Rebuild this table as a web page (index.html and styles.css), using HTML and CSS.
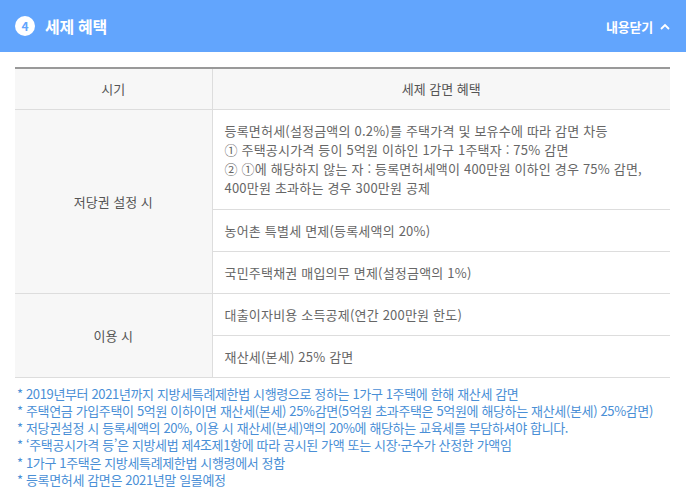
FILE: index.html
```html
<!DOCTYPE html>
<html lang="ko">
<head>
<meta charset="utf-8">
<link rel="stylesheet" href="styles.css">
</head>
<body>
<section class="panel">
  <header class="panel-head">
    <div class="title">
      <span class="num">4</span>
      <h2>세제 혜택</h2>
    </div>
    <button class="toggle">내용닫기
      <svg width="10" height="7" viewBox="0 0 10 7"><path d="M1 6 L5 2 L9 6" fill="none" stroke="#fff" stroke-width="1.8"/></svg>
    </button>
  </header>
  <div class="body">
    <table class="tax">
      <colgroup><col class="c1"><col></colgroup>
      <thead>
        <tr><th>시기</th><th>세제 감면 혜택</th></tr>
      </thead>
      <tbody>
        <tr>
          <th rowspan="3">저당권 설정 시</th>
          <td class="multi">등록면허세(설정금액의 0.2%)를 주택가격 및 보유수에 따라 감면 차등<br>① 주택공시가격 등이 5억원 이하인 1가구 1주택자 : 75% 감면<br>② ①에 해당하지 않는 자 : 등록면허세액이 400만원 이하인 경우 75% 감면,<br>400만원 초과하는 경우 300만원 공제</td>
        </tr>
        <tr><td>농어촌 특별세 면제(등록세액의 20%)</td></tr>
        <tr><td>국민주택채권 매입의무 면제(설정금액의 1%)</td></tr>
        <tr>
          <th rowspan="2">이용 시</th>
          <td>대출이자비용 소득공제(연간 200만원 한도)</td>
        </tr>
        <tr><td>재산세(본세) 25% 감면</td></tr>
      </tbody>
    </table>
    <ul class="notes">
      <li>* 2019년부터 2021년까지 지방세특례제한법 시행령으로 정하는 1가구 1주택에 한해 재산세 감면</li>
      <li>* 주택연금 가입주택이 5억원 이하이면 재산세(본세) 25%감면(5억원 초과주택은 5억원에 해당하는 재산세(본세) 25%감면)</li>
      <li>* 저당권설정 시 등록세액의 20%, 이용 시 재산세(본세)액의 20%에 해당하는 교육세를 부담하셔야 합니다.</li>
      <li>* ‘주택공시가격 등’은 지방세법 제4조제1항에 따라 공시된 가액 또는 시장·군수가 산정한 가액임</li>
      <li>* 1가구 1주택은 지방세특례제한법 시행령에서 정함</li>
      <li>* 등록면허세 감면은 2021년말 일몰예정</li>
    </ul>
  </div>
</section>
</body>
</html>
```
FILE: styles.css
```css
* { box-sizing: border-box; }
html, body { margin: 0; padding: 0; background: #fff; }
body { font-family: "Noto Sans CJK KR", "Noto Sans", sans-serif; }

.panel-head {
  height: 52px;
  background: #62a5fd;
  display: flex;
  align-items: center;
  justify-content: space-between;
  padding: 0 16px 0 15px;
}
.title { display: flex; align-items: center; gap: 10px; }
.num {
  width: 20px; height: 20px; border-radius: 50%;
  background: #fff; color: #62a5fd;
  font-size: 12px; font-weight: 700;
  display: flex; align-items: center; justify-content: center;
  line-height: 1;
}
.title h2 {
  margin: 0; color: #fff; font-size: 16px; font-weight: 700;
  letter-spacing: -0.3px;
}
.toggle {
  border: 0; background: none; padding: 0; color: #fff;
  font-family: inherit; font-size: 13px; font-weight: 700;
  display: flex; align-items: center; gap: 7px;
  letter-spacing: -0.2px;
}

.body { padding: 15px 16px 0 15px; }
.tax {
  width: 100%;
  border-collapse: collapse;
  border-top: 2px solid #999;
  font-size: 13px;
  color: #666;
}
.tax col.c1 { width: 197px; }
.tax th, .tax td {
  border-bottom: 1px solid #ddd;
  font-weight: 400;
  line-height: 19px;
}
.tax thead th {
  background: #f7f7f7;
  height: 41px;
  color: #555;
  text-align: center;
}
.tax thead th + th { border-left: 1px solid #ddd; }
.tax tbody th {
  background: #f7f7f7;
  text-align: center;
  color: #555;
  border-right: 1px solid #ddd;
}
.tax td {
  padding: 11px 12px 11px 12px;
  height: 41px;
  text-align: left;
  letter-spacing: 0.2px;
}
.tax td.multi { padding: 11px 12px 12px 12px; }

.notes {
  list-style: none;
  margin: 7px 0 0 2px;
  padding: 0;
  color: #4a8fd6;
  font-size: 13px;
  line-height: 17.3px;
  letter-spacing: -0.36px;
}
```
